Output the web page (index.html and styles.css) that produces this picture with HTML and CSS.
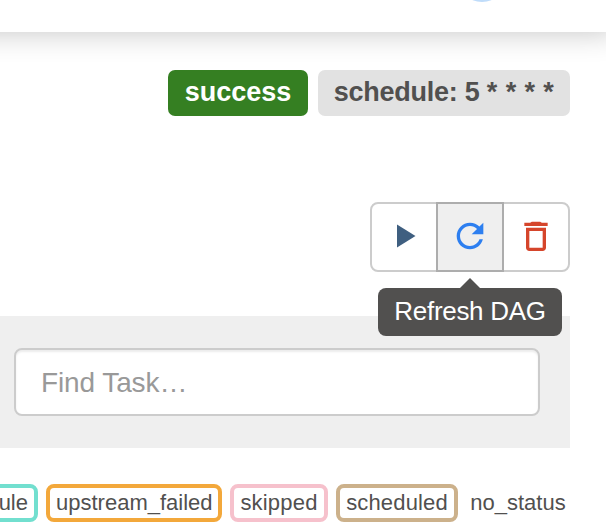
FILE: index.html
```html
<!DOCTYPE html>
<html lang="en">
<head>
<meta charset="utf-8">
<title>DAG</title>
<link rel="stylesheet" href="styles.css">
</head>
<body>
<header class="navbar"><span class="navbar-avatar"></span></header>
<main class="content">
  <div class="labels">
    <span class="label label-success">success</span>
    <span class="label label-schedule">schedule: 5 <span class="cron-rest">* * * *</span></span>
  </div>
  <div class="actions">
    <button class="action" aria-label="Trigger DAG">
      <svg width="68" height="66" viewBox="0 0 68 66"><path fill="#3f5f80" d="M27 21.500v23l18.500-11.500z"/></svg>
    </button>
    <button class="action action-active" aria-label="Refresh">
      <svg width="40" height="40" viewBox="0 0 24 24"><path fill="#2d7ff0" d="M17.650 6.350C16.200 4.900 14.210 4 12 4c-4.420 0-7.990 3.580-7.990 8s3.570 8 7.990 8c3.730 0 6.840-2.550 7.730-6h-2.080c-.82 2.330-3.040 4-5.650 4-3.310 0-6-2.690-6-6s2.690-6 6-6c1.660 0 3.140.69 4.220 1.780L13 11h7V4l-2.350 2.350z"/></svg>
      <span class="tooltip">Refresh DAG</span>
    </button>
    <button class="action" aria-label="Delete DAG">
      <svg width="40" height="40" viewBox="0 0 24 24"><path fill="#d5452b" d="M6 19c0 1.100.9 2 2 2h8c1.100 0 2-.9 2-2V7H6v12zM8 9h8v10H8V9zm6.500-5.500h-5L8.500 4H5v2h14V4h-3.500z"/></svg>
    </button>
  </div>
  <div class="search-panel">
    <input class="search" type="text" placeholder="Find Task…">
  </div>
  <div class="legend">
    <span class="state state-reschedule">up_for_reschedule</span>
    <span class="state state-upstream">upstream_failed</span>
    <span class="state state-skipped">skipped</span>
    <span class="state state-scheduled">scheduled</span>
    <span class="state state-none">no_status</span>
  </div>
</main>
</body>
</html>
```
FILE: styles.css
```css
* { box-sizing: border-box; }
html { overflow: hidden; }
body {
  display: flow-root;
  margin: 0;
  height: 526px;
  overflow: hidden;
  background: #fff;
  color: #51504f;
  font-family: "Liberation Sans", Arial, sans-serif;
}
.navbar {
  position: relative;
  height: 100px;
  margin: -68px -20px 0 -80px;
  background: #fff;
  box-shadow: 0 10px 30px -10px rgba(0, 0, 0, .24);
}
.navbar-avatar {
  position: absolute;
  left: 538px;
  bottom: 30px;
  width: 48px;
  height: 48px;
  border-radius: 50%;
  background: #bfdcfa;
}
.content { width: 570px; padding-top: 38px; }
.labels { position: relative; display: flex; justify-content: flex-end; gap: 10px; }
.label {
  height: 46px;
  border-radius: 7px;
  font-size: 27px;
  font-weight: bold;
  line-height: 44px;
  text-align: center;
  white-space: nowrap;
}
.label-success { width: 140px; background: #357f22; color: #fff; }
.label-schedule { width: 252px; background: #e2e2e2; letter-spacing: -.25px; }
.cron-rest { letter-spacing: .4px; }
.actions {
  display: flex;
  width: 200px;
  height: 70px;
  margin: 86px 0 0 auto;
}
.action {
  position: relative;
  display: flex;
  align-items: center;
  justify-content: center;
  width: 68px;
  margin: 0 0 0 -2px;
  padding: 0 0 2px;
  border: 2px solid #ccc;
  background: #fff;
  color: inherit;
  font: inherit;
}
.action svg { flex: none; }
.action:first-child { margin-left: 0; border-radius: 8px 0 0 8px; }
.action:last-child { border-radius: 0 8px 8px 0; }
.action-active { z-index: 1; border-color: #adadad; background: #efefef; }
.tooltip {
  position: absolute;
  top: 84px;
  left: -60px;
  width: 184px;
  height: 48px;
  border-radius: 8px;
  background: #51504f;
  color: #fff;
  font-size: 26px;
  line-height: 46px;
  letter-spacing: -.3px;
  text-align: center;
  white-space: nowrap;
}
.tooltip::before {
  content: "";
  position: absolute;
  left: 82px;
  bottom: 100%;
  border: 10px solid transparent;
  border-top: 0;
  border-bottom-color: #51504f;
}
.search-panel { height: 132px; margin-top: 44px; padding: 32px 30px 32px 14px; background: #efefef; }
.search {
  display: block;
  width: 100%;
  height: 68px;
  padding: 1px 24px 0 25px;
  border: 2px solid #ccc;
  border-radius: 8px;
  background: #fff;
  box-shadow: inset 0 2px 2px rgba(0, 0, 0, .075);
  font: 28px "Liberation Sans", Arial, sans-serif;
  letter-spacing: -.1px;
}
.search::placeholder { color: #999; opacity: 1; }
.legend { display: flex; justify-content: flex-end; gap: 8px; margin-top: 36px; }
.state {
  flex: none;
  height: 38px;
  padding: 0 6px;
  border: 4px solid;
  border-radius: 8px;
  background: #fff;
  font-size: 22px;
  line-height: 29px;
  text-align: center;
  white-space: nowrap;
}
.state-reschedule { border-color: #72dfcf; }
.state-upstream { width: 176px; border-color: #f3a83b; }
.state-skipped { width: 98px; border-color: #f6c1cc; letter-spacing: .2px; }
.state-scheduled { width: 122px; border-color: #ccb18b; letter-spacing: .15px; }
.state-none { width: 104px; padding: 0; border-color: transparent; }
```
